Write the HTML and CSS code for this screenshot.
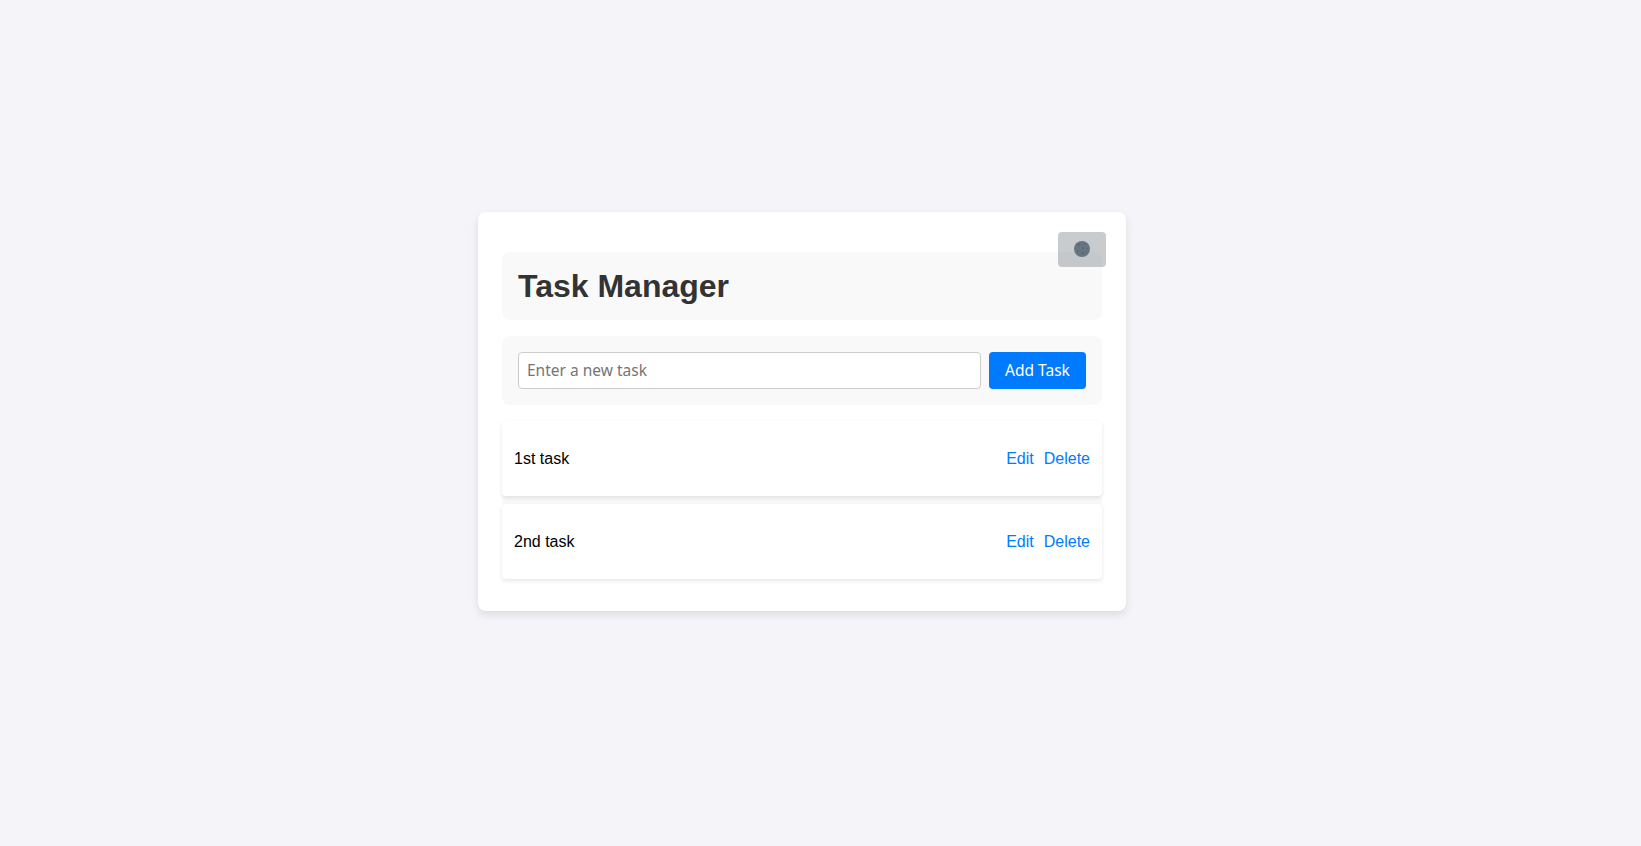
FILE: index.html
```html
<!DOCTYPE html>
<html lang="en">
<head>
<meta charset="utf-8">
<title>Task Manager</title>
<link rel="stylesheet" href="styles.css">
</head>
<body>
<main class="card">
  <button class="theme-toggle" aria-label="Toggle theme">
    <svg class="moon" viewBox="0 0 36 36" aria-hidden="true">
      <circle cx="18" cy="18" r="18" fill="#66757f"/>
      <g fill="#5b6876">
        <circle cx="10.5" cy="8.5" r="3"/><circle cx="20" cy="16" r="2.5"/><circle cx="25" cy="6.5" r="2.2"/>
        <circle cx="8.5" cy="22" r="2.2"/><circle cx="30" cy="17" r="1.8"/>
        <circle cx="20" cy="27" r="3"/><circle cx="28" cy="25" r="1.6"/>
      </g>
    </svg>
  </button>
  <header class="header"><h1 class="title">Task Manager</h1></header>
  <form class="task-form">
    <input class="task-input" type="text" placeholder="Enter a new task">
    <button class="add-button" type="button">Add Task</button>
  </form>
  <ul class="task-list">
    <li class="task"><span>1st task</span><span class="actions"><a class="action">Edit</a><a class="action">Delete</a></span></li>
    <li class="task"><span>2nd task</span><span class="actions"><a class="action">Edit</a><a class="action">Delete</a></span></li>
  </ul>
</main>
</body>
</html>
```
FILE: styles.css
```css
* { box-sizing: border-box; }
body {
  margin: 0;
  height: 846px;
  padding: 0 37px 23px 0;
  display: flex;
  justify-content: center;
  align-items: center;
  background: #f4f4f9;
  font: 16px/18px "Liberation Sans", Arial, sans-serif;
  color: #000;
}
.card {
  position: relative;
  width: 648px;
  padding: 40px 24px 32px;
  background: #fff;
  border-radius: 8px;
  box-shadow: 0 4px 8px rgba(0, 0, 0, 0.1);
}
.header, .task-form {
  padding: 16px;
  margin-bottom: 16px;
  background: #f9f9f9;
  border-radius: 8px;
}
.title {
  margin: 0;
  font-size: 32px;
  line-height: 36px;
  color: #333;
}
.task-form { display: flex; gap: 8px; }
.task-input {
  flex: 1;
  min-width: 0;
  height: 37px;
  padding: 0 8px 2px;
  border: 1px solid #ccc;
  border-radius: 4px;
  background: #fff;
  font: 15.5px "Noto Sans", sans-serif;
}
.task-input::placeholder { color: #757575; }
.add-button {
  width: 97px;
  height: 37px;
  padding: 0 0 2px;
  border: 0;
  border-radius: 4px;
  background: #007bff;
  color: #fff;
  font: 15.5px "Noto Sans", sans-serif;
}
.theme-toggle {
  position: absolute;
  top: 20px;
  right: 20px;
  width: 48px;
  height: 35px;
  padding: 0 0 1px;
  display: flex;
  justify-content: center;
  align-items: center;
  border: 0;
  border-radius: 4px;
  background: rgba(75, 86, 95, 0.3);
}
.moon { width: 16px; height: 16px; }
.task-list {
  margin: 0;
  padding: 0;
  list-style: none;
  display: flex;
  flex-direction: column;
  gap: 8px;
  border-radius: 8px;
  background: #f9f9f9;
}
.task {
  display: flex;
  justify-content: space-between;
  align-items: center;
  height: 75px;
  padding: 0 12px;
  background: #fff;
  border-radius: 4px;
  box-shadow: 0 2px 4px rgba(0, 0, 0, 0.1);
}
.actions { display: flex; gap: 10px; }
.action { color: #007bff; }
```
